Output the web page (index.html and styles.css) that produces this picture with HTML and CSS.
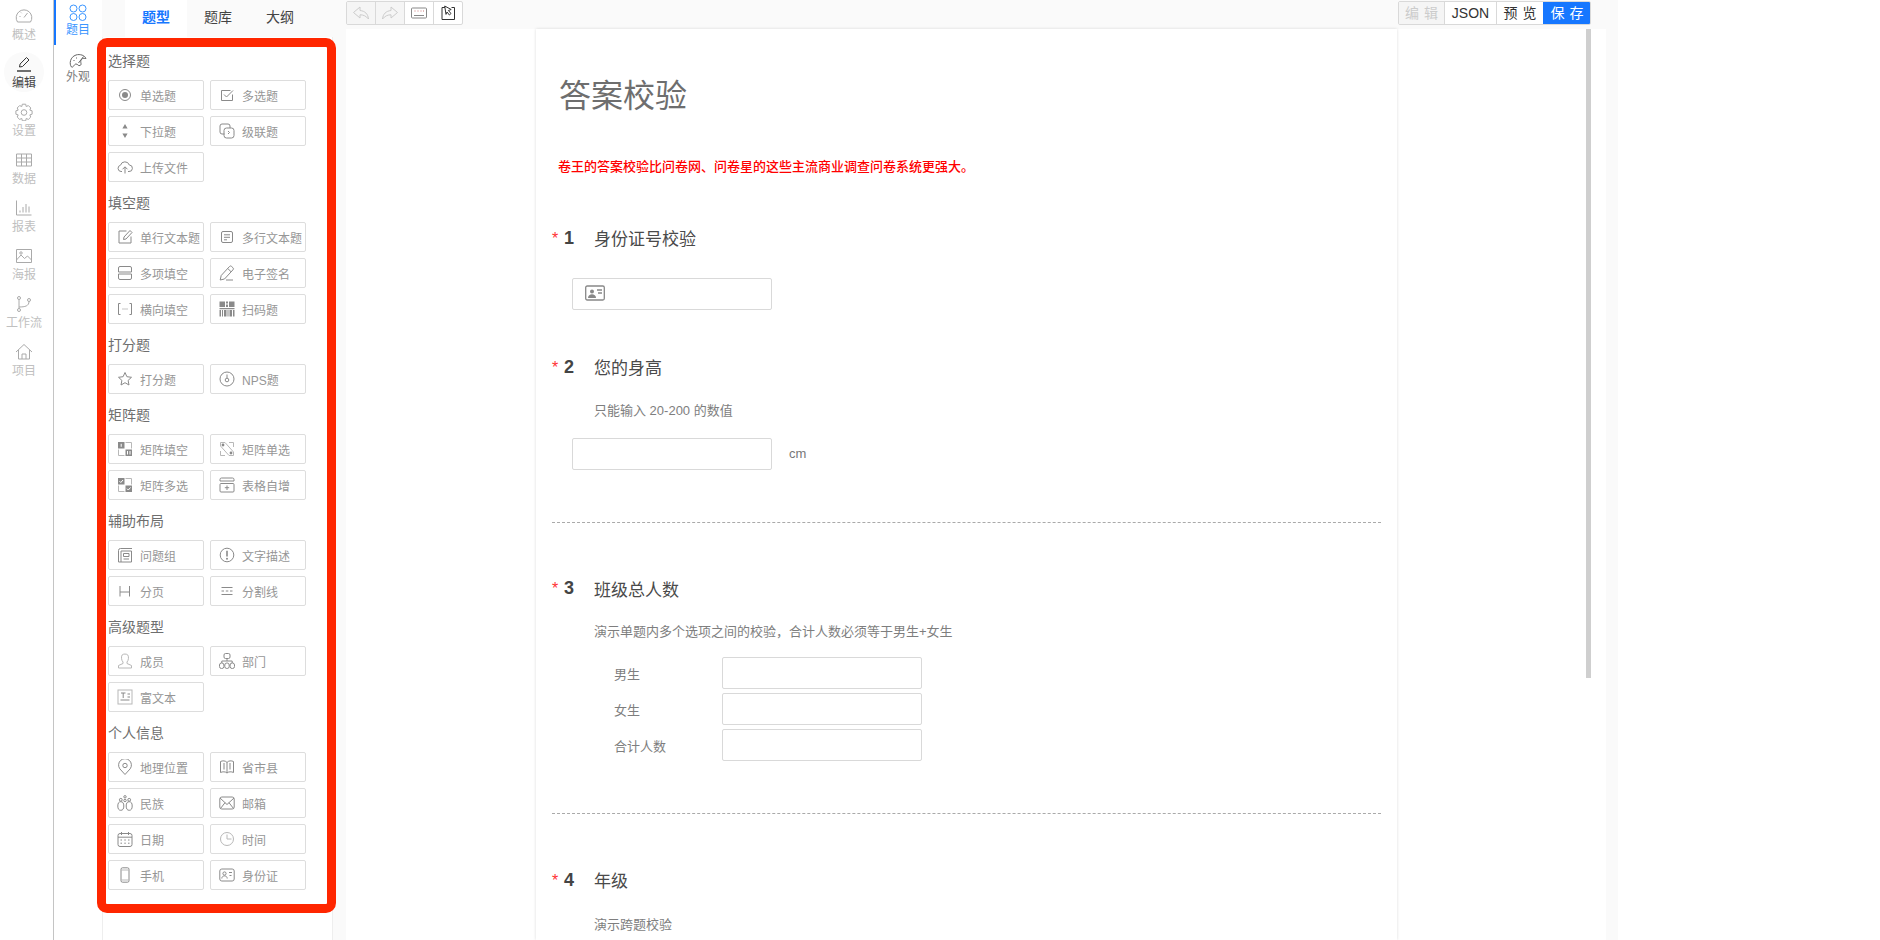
FILE: index.html
```html
<!DOCTYPE html>
<html lang="zh-CN">
<head>
<meta charset="utf-8">
<title>答案校验</title>
<link rel="stylesheet" href="styles.css">
</head>
<body>
<svg class="defs" aria-hidden="true">
  <symbol id="i-radio" viewBox="0 0 16 16"><circle cx="8" cy="8" r="5.500"/><circle class="f" cx="8" cy="8" r="3"/></symbol>
  <symbol id="i-check" viewBox="0 0 16 16"><path d="M13.500 7.500V13.500H2.500V3.500h9"/><path d="M5 7.500L7.500 10l6.500-6.500"/></symbol>
  <symbol id="i-select" viewBox="0 0 16 16"><path class="f" d="M8 1l2.600 4.500H5.400zM8 15l-2.600-4.500h5.200z"/></symbol>
  <symbol id="i-cascade" viewBox="0 0 16 16"><path d="M5.500 11H3A2 2 0 0 1 1 9V3a2 2 0 0 1 2-2h6a2 2 0 0 1 2 2v2"/><rect x="5" y="5" width="10" height="10" rx="2.500"/><path d="M9 8l1.500 1.500L9 11"/></symbol>
  <symbol id="i-upload" viewBox="0 0 16 16"><path d="M5 12.500H4A3.200 3.200 0 0 1 3.500 6.200 4.600 4.600 0 0 1 12.300 6 3.200 3.200 0 0 1 12 12.500h-1"/><path d="M8 14.500V8M5.500 10.300L8 7.800l2.500 2.500"/></symbol>
  <symbol id="i-edit" viewBox="0 0 16 16"><path d="M14 7.500V14H2V2h7.500"/><path d="M6.500 10.500l.5-2.500L13 1.500l2 2L9 10z"/></symbol>
  <symbol id="i-lines" viewBox="0 0 16 16"><rect x="2.500" y="2.500" width="11" height="11" rx="1.500"/><path d="M5 5.800h6M5 8.300h6M5 10.800h3"/></symbol>
  <symbol id="i-multi" viewBox="0 0 16 16"><path d="M3 1.500h10A1.500 1.500 0 0 1 14.500 3v4h-13V3A1.500 1.500 0 0 1 3 1.500zM1.500 9h13v4a1.500 1.500 0 0 1-1.500 1.500H3A1.500 1.500 0 0 1 1.500 13z"/></symbol>
  <symbol id="i-sign" viewBox="0 0 16 16"><path d="M1.200 15l1-4.500L10.500 1.500a1.500 1.500 0 0 1 2.200 0l1.200 1.200a1.500 1.500 0 0 1 0 2.200L5.500 14z"/><path d="M8.800 3.500l3.500 3.500M7 15h7"/></symbol>
  <symbol id="i-hfill" viewBox="0 0 16 16"><path d="M3.500 2.500H1.500v11h2M12.500 2.500h2v11h-2M5.500 8h1M7.500 8h1M9.500 8h1"/></symbol>
  <symbol id="i-qr" viewBox="0 0 16 16"><path class="f" d="M.5.500H6V6H.5zM7 .500h2v2H7zM10 .500h5.500V6H10zM7 3.500h2V6H7zM.5 7h15v1.200H.5zM.5 9H2v6.500H.5zM3 9h1v6.500H3zM5 9h2.500v6.500H5zM8.500 9h1v6.500h-1zM10.500 9H13v6.500h-2.500zM14 9h1.500v6.500H14z"/></symbol>
  <symbol id="i-star" viewBox="0 0 16 16"><path d="M8 1.500l1.900 4.200 4.600.6-3.400 3.100.9 4.600L8 11.700 4 14l.9-4.600-3.400-3.100 4.600-.6z"/></symbol>
  <symbol id="i-nps" viewBox="0 0 16 16"><circle cx="8" cy="8" r="7"/><circle cx="8" cy="9" r="1.800"/><path d="M8 7V3.500"/></symbol>
  <symbol id="i-mfill" viewBox="0 0 16 16"><path class="f" d="M1 1h6.500v6.500H1zM8.500 8.500H15V15H8.500z"/><path class="w" d="M4.200 2.800v3M10.500 10v3.500M13 10v3.500"/><path class="l" d="M8.500 1.500h6v6M1.500 8.500v6h6"/></symbol>
  <symbol id="i-msingle" viewBox="0 0 16 16"><path class="l" d="M1.500 5V1.500H6l8.500 9.500v3.500H10zM10 1.500h4.500V6M1.500 10v4.500H6"/><circle class="f" cx="4" cy="4" r="1.400"/><circle class="f" cx="12" cy="12" r="1.400"/></symbol>
  <symbol id="i-mmulti" viewBox="0 0 16 16"><path class="f" d="M1 1h6.500v6.500H1zM8.500 8.500H15V15H8.500z"/><path class="w" d="M2.500 4.200l1.300 1.300 2.200-2.500M10 11.700l1.300 1.300 2.200-2.500"/><path class="l" d="M8.500 1.500h6v6M1.500 8.500v6h6"/></symbol>
  <symbol id="i-grow" viewBox="0 0 16 16"><path d="M1 4V2.500A1.500 1.500 0 0 1 2.500 1h11A1.500 1.500 0 0 1 15 2.500V4z"/><rect x="1" y="6.500" width="14" height="8.500" rx="1"/><path d="M8 8.500v4.500M5.800 10.700h4.400"/></symbol>
  <symbol id="i-group" viewBox="0 0 16 16"><path d="M1.500 15V3.500a2 2 0 0 1 2-2H15M1.500 15h13V4H4v11"/><path d="M6.500 6.500h5.500v3H6.500zM6.500 12h5.500"/></symbol>
  <symbol id="i-info" viewBox="0 0 16 16"><circle cx="8" cy="8" r="6.800"/><path class="thick" d="M8 3.800v5.700"/><circle class="f" cx="8" cy="11.800" r="1"/></symbol>
  <symbol id="i-page" viewBox="0 0 16 16"><path d="M3 3v10.500M12.500 3v10.500M3 9h9.500"/></symbol>
  <symbol id="i-divider" viewBox="0 0 16 16"><path d="M2.500 4.500h11M2.500 11.500h11M2.500 8h2.500M6.800 8h2.500M11 8h2.500"/></symbol>
  <symbol id="i-user" viewBox="0 0 16 16"><path class="l" d="M6 10.500V9C4.300 7.500 4 3 5.300 1.800c1.300-1 4-1 5.300 0C12 3 11.700 7.500 10 9v1.500l4.500 2V15h-13v-2.500z"/></symbol>
  <symbol id="i-dept" viewBox="0 0 16 16"><rect x="5" y=".5" width="6" height="5" rx="1.500"/><path d="M8 5.500v2.500M2.800 10V8h10.400v2"/><rect x=".5" y="10" width="4.400" height="5.500" rx="2"/><rect x="5.800" y="10" width="4.400" height="5.500" rx="2"/><rect x="11.100" y="10" width="4.400" height="5.500" rx="2"/></symbol>
  <symbol id="i-rich" viewBox="0 0 16 16"><rect class="l" x="1" y="1" width="14" height="14"/><path d="M4 4h4.500M6.200 4v5M10.500 5h2.500M10.500 8h2.500M3.500 11h9"/></symbol>
  <symbol id="i-pin" viewBox="0 0 16 16"><path d="M8 15.500L2.800 9.800a6.400 6.400 0 1 1 10.400 0z"/><circle cx="8" cy="6.500" r="2.200"/></symbol>
  <symbol id="i-map" viewBox="0 0 16 16"><path d="M1.500 13.500V2.500C3.500 1.500 6.500 1.500 8 3.500c1.500-2 4.500-2 6.500-1v11c-2-1-5-1-6.500 .5-1.500-1.500-4.500-1.500-6.500-.5zM5 4v6.500M11 4v6.500M8 3.500V14"/></symbol>
  <symbol id="i-people" viewBox="0 0 16 16"><circle cx="8" cy="1.800" r="1.200"/><circle cx="3.800" cy="4.800" r="1.400"/><circle cx="12.200" cy="4.800" r="1.400"/><circle cx="8" cy="5.500" r="1.200"/><ellipse cx="3.800" cy="11" rx="3" ry="4.300"/><ellipse cx="12.200" cy="11" rx="3" ry="4.300"/></symbol>
  <symbol id="i-mail" viewBox="0 0 16 16"><rect x=".8" y="2" width="14.400" height="12" rx="2"/><path d="M1 3l7 6.500L15 3M1.500 13.500l4.500-5.800M14.500 13.500L10 7.700"/></symbol>
  <symbol id="i-date" viewBox="0 0 16 16"><rect x="1" y="2.500" width="14" height="13" rx="2"/><path d="M1 6.200h14M4.500 1v3M11.500 1v3M3.500 9h1.500M7.300 9h1.500M11 9h1.500M3.500 12.200h1.500M7.300 12.200h1.500M11 12.200h1.500"/></symbol>
  <symbol id="i-clock" viewBox="0 0 16 16"><circle class="l" cx="8" cy="8" r="6.500"/><path class="l" d="M8 3.500V8h4.500"/></symbol>
  <symbol id="i-phone" viewBox="0 0 16 16"><rect x="4" y=".8" width="8" height="14.400" rx="1.500"/><path class="l" d="M4 3h8M4 13h8"/></symbol>
  <symbol id="i-idcard" viewBox="0 0 16 16"><rect x=".8" y="2" width="14.400" height="12" rx="2"/><circle cx="5.500" cy="6.500" r="1.600"/><path d="M2.800 11.500c0-3.500 5.400-3.500 5.400 0M10 5.500h3M10.500 8.500h2"/></symbol>
</svg>

<div class="app">
  <nav class="rail">
    <a class="rail-item">
      <svg class="rail-icon" viewBox="0 0 18 18"><path d="M2.500 15a7.800 7.800 0 1 1 13 0z"/><path d="M9 10.500l3.500-4.500M4.500 9.500h1M6 5.500l.7.7"/></svg>
      <span>概述</span>
    </a>
    <a class="rail-item is-active">
      <svg class="rail-icon" viewBox="0 0 18 18"><path d="M4.500 12l.6-3L11.500 2.500l2.500 2.500-6.500 6.500z"/><path class="thick" d="M2 16h14"/></svg>
      <span>编辑</span>
    </a>
    <a class="rail-item">
      <svg class="rail-icon" viewBox="0 0 18 18"><path d="M7.300 1.200h3.400l.5 2.300 2.200-.9 2.400 2.400-1 2.100 2.300.7v3.400l-2.300.7 1 2.100-2.400 2.400-2.200-.9-.5 2.300H7.300l-.5-2.300-2.200.9-2.400-2.400 1-2.100-2.300-.7V7.800l2.300-.7-1-2.100 2.400-2.400 2.200.9z"/><circle cx="9" cy="9.500" r="2.800"/></svg>
      <span>设置</span>
    </a>
    <a class="rail-item">
      <svg class="rail-icon" viewBox="0 0 18 18"><path d="M1.500 3h15v12h-15zM1.500 7h15M1.500 11h15M6.500 3v12M11.500 3v12"/></svg>
      <span>数据</span>
    </a>
    <a class="rail-item">
      <svg class="rail-icon" viewBox="0 0 18 18"><path d="M1.500 1.500v14.500h15M5 13.500v-2M8 13.500V8M11 13.500V5M14 13.500V7.500"/></svg>
      <span>报表</span>
    </a>
    <a class="rail-item">
      <svg class="rail-icon" viewBox="0 0 18 18"><path d="M1.500 2.500h15v13h-15zM1.500 13l4.500-5 3.500 3.500 3-2.500 4 4"/><circle cx="6" cy="6" r="1.200"/></svg>
      <span>海报</span>
    </a>
    <a class="rail-item">
      <svg class="rail-icon" viewBox="0 0 18 18"><circle cx="4" cy="3" r="1.500"/><circle cx="4" cy="15" r="1.500"/><circle cx="14" cy="5" r="1.500"/><path d="M4 4.500v9M4 12c6 0 10-1 10-5.500"/></svg>
      <span>工作流</span>
    </a>
    <a class="rail-item">
      <svg class="rail-icon" viewBox="0 0 18 18"><path d="M1 9l8-7.500L17 9M3.500 7v9h11V7M7 16v-5h4v5"/></svg>
      <span>项目</span>
    </a>
  </nav>

  <aside class="side">
    <a class="side-item is-active">
      <svg class="side-icon" viewBox="0 0 18 18"><circle cx="4.500" cy="4.500" r="3.500"/><circle cx="13.500" cy="4.500" r="3.500"/><circle cx="4.500" cy="13" r="3.500"/><circle cx="13.500" cy="13" r="3.500"/></svg>
      <span>题目</span>
    </a>
    <a class="side-item">
      <svg class="side-icon" viewBox="0 0 18 18"><path d="M2.500 15C0 12 1 5 7 3c4-1.300 9 .5 10 3.500-1 0-3-1-4.500 1-2 2.500 1 5-1.500 6-2 .8-2-1.500-4-1.500-2 0-2.500 4-4.500 3z"/><path d="M9.500 11l5-6.500M4.500 8.500h1M7 6h1"/></svg>
      <span>外观</span>
    </a>
  </aside>

  <section class="panel">
    <div class="tabs">
      <a class="tab is-active">题型</a>
      <a class="tab">题库</a>
      <a class="tab">大纲</a>
    </div>
    <div class="palette">
      <h3 class="group-title">选择题</h3>
      <div class="group">
        <a class="qtype"><svg class="ic"><use href="#i-radio"/></svg>单选题</a>
        <a class="qtype"><svg class="ic"><use href="#i-check"/></svg>多选题</a>
        <a class="qtype"><svg class="ic"><use href="#i-select"/></svg>下拉题</a>
        <a class="qtype"><svg class="ic"><use href="#i-cascade"/></svg>级联题</a>
        <a class="qtype"><svg class="ic"><use href="#i-upload"/></svg>上传文件</a>
      </div>
      <h3 class="group-title">填空题</h3>
      <div class="group">
        <a class="qtype"><svg class="ic"><use href="#i-edit"/></svg>单行文本题</a>
        <a class="qtype"><svg class="ic"><use href="#i-lines"/></svg>多行文本题</a>
        <a class="qtype"><svg class="ic"><use href="#i-multi"/></svg>多项填空</a>
        <a class="qtype"><svg class="ic"><use href="#i-sign"/></svg>电子签名</a>
        <a class="qtype"><svg class="ic"><use href="#i-hfill"/></svg>横向填空</a>
        <a class="qtype"><svg class="ic"><use href="#i-qr"/></svg>扫码题</a>
      </div>
      <h3 class="group-title">打分题</h3>
      <div class="group">
        <a class="qtype"><svg class="ic"><use href="#i-star"/></svg>打分题</a>
        <a class="qtype"><svg class="ic"><use href="#i-nps"/></svg>NPS题</a>
      </div>
      <h3 class="group-title">矩阵题</h3>
      <div class="group">
        <a class="qtype"><svg class="ic"><use href="#i-mfill"/></svg>矩阵填空</a>
        <a class="qtype"><svg class="ic"><use href="#i-msingle"/></svg>矩阵单选</a>
        <a class="qtype"><svg class="ic"><use href="#i-mmulti"/></svg>矩阵多选</a>
        <a class="qtype"><svg class="ic"><use href="#i-grow"/></svg>表格自增</a>
      </div>
      <h3 class="group-title">辅助布局</h3>
      <div class="group">
        <a class="qtype"><svg class="ic"><use href="#i-group"/></svg>问题组</a>
        <a class="qtype"><svg class="ic"><use href="#i-info"/></svg>文字描述</a>
        <a class="qtype"><svg class="ic"><use href="#i-page"/></svg>分页</a>
        <a class="qtype"><svg class="ic"><use href="#i-divider"/></svg>分割线</a>
      </div>
      <h3 class="group-title">高级题型</h3>
      <div class="group">
        <a class="qtype"><svg class="ic"><use href="#i-user"/></svg>成员</a>
        <a class="qtype"><svg class="ic"><use href="#i-dept"/></svg>部门</a>
        <a class="qtype"><svg class="ic"><use href="#i-rich"/></svg>富文本</a>
      </div>
      <h3 class="group-title">个人信息</h3>
      <div class="group">
        <a class="qtype"><svg class="ic"><use href="#i-pin"/></svg>地理位置</a>
        <a class="qtype"><svg class="ic"><use href="#i-map"/></svg>省市县</a>
        <a class="qtype"><svg class="ic"><use href="#i-people"/></svg>民族</a>
        <a class="qtype"><svg class="ic"><use href="#i-mail"/></svg>邮箱</a>
        <a class="qtype"><svg class="ic"><use href="#i-date"/></svg>日期</a>
        <a class="qtype"><svg class="ic"><use href="#i-clock"/></svg>时间</a>
        <a class="qtype"><svg class="ic"><use href="#i-phone"/></svg>手机</a>
        <a class="qtype"><svg class="ic"><use href="#i-idcard"/></svg>身份证</a>
      </div>
    </div>
    <div class="highlight"></div>
  </section>

  <main class="main">
    <header class="toolbar">
      <div class="btn-group">
        <button class="tool is-disabled"><svg class="tool-icon" viewBox="0 0 18 18"><path d="M8 3L1.500 8.500 8 14v-3.200c3.500 0 6 1.200 8.500 4.200-.5-5-3.500-8-8.500-8.500z"/></svg></button>
        <button class="tool is-disabled"><svg class="tool-icon" viewBox="0 0 18 18"><path d="M10 3l6.500 5.500L10 14v-3.200c-3.500 0-6 1.200-8.500 4.200.5-5 3.500-8 8.500-8.500z"/></svg></button>
        <button class="tool"><svg class="tool-icon" viewBox="0 0 18 18"><rect x="1.500" y="4" width="15" height="10" rx="1"/><path class="accent" d="M4.500 7h1M7.500 7h1M10.500 7h1M13 7h1"/><path d="M4 11.500h10"/></svg></button>
        <button class="tool"><svg class="tool-icon dark" viewBox="0 0 18 18"><path d="M6 3.500H3v12h12.500v-12h-3"/><path d="M3.500 0.800l6.500 3.500-2.800 1 2.600 3-1.600 1.500L5.800 6.800l-1 2.400z" transform="translate(2.200 1.200)"/></svg></button>
      </div>
      <div class="btn-group">
        <button class="act is-disabled">编 辑</button>
        <button class="act">JSON</button>
        <button class="act">预 览</button>
        <button class="act is-primary">保 存</button>
      </div>
    </header>
    <div class="canvas">
      <article class="paper">
        <h1 class="survey-title">答案校验</h1>
        <p class="survey-note">卷王的答案校验比问卷网、问卷星的这些主流商业调查问卷系统更强大。</p>

        <div class="q-head q-first"><i class="star">*</i><b class="num">1</b><span class="q-title">身份证号校验</span></div>
        <div class="input q-input1">
          <svg class="input-icon" viewBox="0 0 20 16"><rect x=".7" y="1" width="18.600" height="14" rx="1.500"/><circle class="f" cx="7" cy="6.500" r="2"/><path class="f" d="M3 13c0-5 8-5 8 0z"/><path d="M12 5h5M13 8h4"/></svg>
        </div>

        <div class="q-head q-second"><i class="star">*</i><b class="num">2</b><span class="q-title">您的身高</span></div>
        <p class="q-desc">只能输入 20-200 的数值</p>
        <div class="unit-row"><div class="input"></div><span class="unit">cm</span></div>

        <hr class="divider">

        <div class="q-head"><i class="star">*</i><b class="num">3</b><span class="q-title">班级总人数</span></div>
        <p class="q-desc">演示单题内多个选项之间的校验，合计人数必须等于男生+女生</p>
        <div class="fields">
          <label class="field-label">男生</label><div class="input"></div>
          <label class="field-label">女生</label><div class="input"></div>
          <label class="field-label">合计人数</label><div class="input"></div>
        </div>

        <hr class="divider">

        <div class="q-head"><i class="star">*</i><b class="num">4</b><span class="q-title">年级</span></div>
        <p class="q-desc q-desc-last">演示跨题校验</p>
      </article>
      <div class="scroll-gutter"><div class="scroll-thumb"></div></div>
    </div>
  </main>
</div>
</body>
</html>
```

FILE: styles.css
```css
* { box-sizing: border-box; }
html, body { margin: 0; height: 100%; background: #fff; overflow: hidden; }
body { font-family: "Liberation Sans", "Noto Sans CJK SC", sans-serif; color: #555; }
a { display: block; }
.defs { position: absolute; width: 0; height: 0; }
.defs * { fill: none; stroke: #8a8a8a; stroke-width: 1; }
.defs .f { fill: #8a8a8a; stroke: none; }
.defs .l { stroke: #b8b8b8; }
.defs .w { stroke: #fff; }
.defs .thick { stroke-width: 1.600; }

.app { display: flex; width: 1880px; height: 940px; overflow: hidden; }

/* rail */
.rail { width: 54px; flex: none; border-right: 1px solid #c4c4c4; padding-top: 5px; display: flex; flex-direction: column; }
.rail-item { height: 48px; display: flex; flex-direction: column; align-items: center; font-size: 12px; line-height: 16px; color: #c0c0c0; position: relative; width: 48px; }
.rail-icon { width: 18px; height: 18px; margin: 2px 0 2px; fill: none; stroke: #aaa; stroke-width: 1; }
.rail-item.is-active { color: #444; }
.rail-item.is-active::before { content: ""; position: absolute; left: 4px; top: -1px; width: 40px; height: 40px; border-radius: 50%; background: #fafafa; }
.rail-item.is-active > * { position: relative; }
.rail-item.is-active .rail-icon { stroke: #333; }
.rail-item .thick { stroke-width: 1.400; }

/* second column */
.side { width: 48px; flex: none; display: flex; flex-direction: column; }
.side-item { height: 48px; display: flex; flex-direction: column; align-items: center; font-size: 12px; line-height: 16px; color: #808080; padding-top: 4px; }
.side-item:first-child { height: 45px; margin-bottom: 3px; }
.side-item:last-child .side-icon { margin-bottom: -1px; }
.side-item.is-active { color: #3b96ff; border-left: 2px solid #1677ff; padding-right: 2px; }
.side-icon { width: 18px; height: 18px; fill: none; stroke: #666; stroke-width: 1; }
.side-item.is-active .side-icon { stroke: #3b96ff; }

/* palette */
.panel { width: 244px; flex: none; background: #fafafa; position: relative; padding-right: 13px; display: flex; flex-direction: column; }
.tabs { display: flex; height: 37px; padding-left: 23px; }
.tab { width: 62px; text-align: center; font-size: 14px; line-height: 35px; color: #444; }
.tab.is-active { background: #fff; color: #1677ff; font-weight: 700; }
.palette { flex: 1; background: #fff; border-left: 1px solid #eee; border-right: 1px solid #eee; padding: 13px 0 0 5px; }
.group-title { margin: 0 0 8px; font-size: 14px; line-height: 22px; font-weight: 400; color: #6e6e6e; }
.group { display: grid; grid-template-columns: 96px 96px; gap: 6px; margin-bottom: 10px; }
.qtype { height: 30px; border: 1px solid #ddd; border-radius: 2px; display: flex; align-items: center; padding-left: 8px; font-size: 12px; color: #969696; white-space: nowrap; }
.ic { width: 16px; height: 16px; flex: none; margin-right: 7px; }
.highlight { position: absolute; left: -5px; top: 38px; width: 239px; height: 875px; border: 9px solid #ff2600; border-radius: 10px; pointer-events: none; }

/* main */
.main { width: 1272px; flex: none; background: #fafafa; display: flex; flex-direction: column; }
.toolbar { height: 29px; flex: none; display: flex; justify-content: space-between; padding: 1px 27px 0 0; align-items: flex-start; }
.btn-group { display: flex; height: 24px; border: 1px solid #d9d9d9; border-radius: 2px; background: #fff; overflow: hidden; }
button { margin: 0; padding: 0; border: 0; background: none; font: inherit; }
.tool { width: 29px; height: 22px; border-left: 1px solid #d9d9d9; display: flex; align-items: center; justify-content: center; }
.tool:first-child { border-left: 0; width: 28px; }
.tool.is-disabled { background: #f5f5f5; }
.tool-icon { width: 18px; height: 18px; fill: none; stroke: #888; stroke-width: 1; }
.tool.is-disabled .tool-icon { stroke: #ccc; }
.tool-icon.dark { stroke: #333; }
.tool-icon .accent { stroke: #c77; }
.act { width: 47px; height: 22px; border-left: 1px solid #d9d9d9; font-size: 14px; color: #333; white-space: nowrap; line-height: 20px; word-spacing: 1px; text-align: center; }
.act:first-child { border-left: 0; width: 45px; }
.act:nth-child(2) { width: 52px; }
.act.is-disabled { background: #f5f5f5; color: #ccc; }
.act.is-primary { background: #1677ff; color: #fff; border-left-color: #1677ff; }

.canvas { flex: 1; min-height: 0; display: flex; background: #fff; width: 1260px; padding-left: 190px; }
.paper { width: 861px; flex: none; box-shadow: 0 0 3px rgba(0,0,0,.14); padding: 0 16px; overflow: hidden; }
.survey-title { margin: 47px 0 0 7px; font-size: 32px; line-height: 40px; font-weight: 400; color: #6e6e6e; }
.survey-note { margin: 41px 0 0 6px; font-size: 13px; line-height: 20px; color: #f00; font-weight: 500; }
.q-head { display: flex; align-items: center; height: 22px; margin-top: 57px; }
.q-first { margin-top: 52px; }
.q-second { margin-top: 48px; }
.star { width: 12px; font-style: normal; font-size: 16px; color: #f33; line-height: 14px; margin-top: -3px; }
.num { width: 30px; font-size: 18px; color: #444; line-height: 20px; margin-top: -5px; }
.q-title { font-size: 17px; color: #4a4a4a; line-height: 22px; }
.q-desc { margin: 20.500px 0 0 42px; font-size: 13px; line-height: 20px; color: #7e7e7e; }
.q-desc-last { margin-top: 21.500px; }
.input { width: 200px; height: 32px; border: 1px solid #d9d9d9; border-radius: 2px; background: #fff; }
.q-input1 { margin: 27px 0 0 20px; padding: 6px 12px; }
.input-icon { display: block; width: 20px; height: 16px; fill: none; stroke: #888; stroke-width: 1.300; }
.input-icon .f { fill: #888; stroke: none; }
.unit-row { display: flex; align-items: center; margin: 17px 0 0 20px; }
.unit { margin-left: 17px; font-size: 13px; color: #777; }
.divider { height: 0; margin: 52px 0 0; border: 0; border-top: 1px dashed #aaa; }
.fields { display: grid; grid-template-columns: 108px 200px; row-gap: 4px; margin: 15px 0 0 62px; align-items: center; }
.field-label { font-size: 13px; color: #7e7e7e; }
.scroll-gutter { width: 209px; flex: none; padding-left: 189px; }
.scroll-thumb { width: 5px; height: 649px; background: #cfcfcf; }
```
